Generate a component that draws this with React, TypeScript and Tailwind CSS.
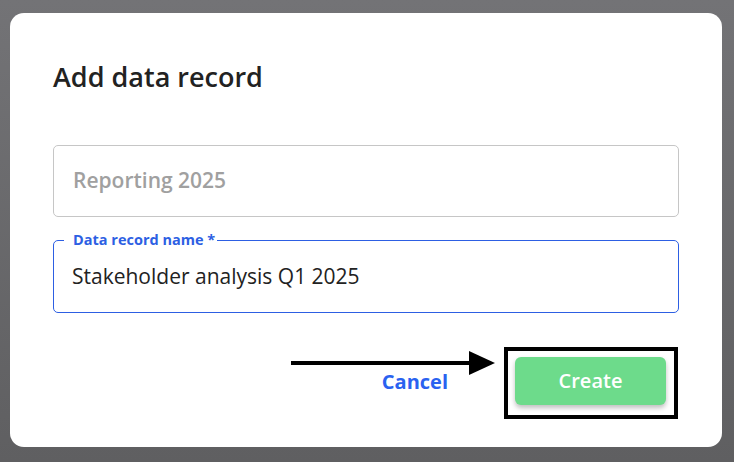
export default function App() {
  return (
    <div
      className="relative w-[734px] h-[462px] overflow-hidden bg-gradient-to-b from-[#737376] to-[#5f5f61] pt-[13px] pl-[10px]"
      style={{ fontFamily: "'Open Sans', 'Noto Sans', Arial, sans-serif" }}
    >
      <div className="w-[712px] h-[434px] rounded-[14px] bg-white px-[43px] pt-[49px]">
        <h1 className="text-[27px] leading-[30px] font-semibold text-[#222222]">Add data record</h1>

        {/* Parent report (read-only) */}
        <div className="mt-[53px] h-[72px] rounded-[5px] border border-[#c6c6c6] flex items-center pl-[19px]">
          <span className="text-[21px] font-semibold text-[#a0a0a0]">Reporting 2025</span>
        </div>

        {/* Name field, focused */}
        <div className="relative mt-[23px] h-[73px] rounded-[5px] border border-[#2d5fe3] flex items-center pl-[18px]">
          <span className="absolute -top-[11px] left-[10px] bg-white pl-[9px] pr-[2px] text-[14.5px] leading-[20px] font-bold text-[#2d5fe3]">
            Data record name *
          </span>
          <span className="text-[21px] text-[#222222]">Stakeholder analysis Q1 2025</span>
        </div>

        {/* Footer */}
        <div className="mt-[34px] flex items-center justify-end">
          <button className="mr-[56px] mt-[-3px] text-[20px] font-bold text-[#2a62f0]">Cancel</button>
          <div className="border-[4px] border-black pt-[6px] pb-[10px] pl-[7px] pr-[8px] mr-[1px]">
            <button className="w-[151px] h-[48px] rounded-[6px] bg-[#6ddb8b] text-white text-[20px] font-semibold shadow-[0_3px_5px_rgba(0,0,0,0.25)]">
              Create
            </button>
          </div>
        </div>
      </div>

      {/* Annotation arrow */}
      <svg className="absolute left-[290px] top-[350px]" width="206" height="27" viewBox="0 0 206 27">
        <rect x="1" y="11" width="180" height="4" fill="#000" />
        <polygon points="179,1 205,13 179,25" fill="#000" />
      </svg>
    </div>
  )
}
